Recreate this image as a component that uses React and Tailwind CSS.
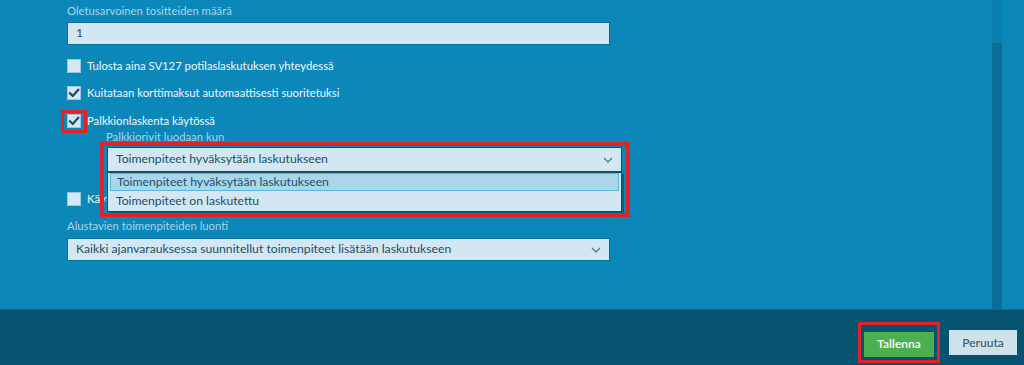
import React from 'react';

const font = { fontFamily: 'Lato, "Noto Sans", sans-serif' };

const Check = () => (
    <svg width="12" height="12" viewBox="0 0 12 12" className="block">
        <path d="M2 6.2 L4.8 9 L10.2 2.8" fill="none" stroke="#1b4966" strokeWidth="2.2" strokeLinecap="square" />
    </svg>
);

const Checkbox = ({ checked }) => (
    <div className="w-[14px] h-[14px] bg-[#d3e8f2] border border-[#9cc8dc] flex items-center justify-center shrink-0">
        {checked && <Check />}
    </div>
);

const Chevron = () => (
    <svg width="10" height="6" viewBox="0 0 10 6">
        <path d="M1 1 L5 5 L9 1" fill="none" stroke="#4a7f9c" strokeWidth="1.3" />
    </svg>
);

const CheckRow = ({ checked, label, className = '', children }) => (
    <div className={`relative flex items-center gap-[6px] h-[16px] ${className}`}>
        <Checkbox checked={checked} />
        <span className="text-[11.3px] text-[#eef7fb] leading-[16px] whitespace-nowrap">{label}</span>
        {children}
    </div>
);

const App = () => {
    return (
        <div className="w-[1024px] h-[365px] flex flex-col overflow-hidden bg-[#0b87ba]" style={font}>
            {/* Settings panel */}
            <div className="relative h-[309px] flex">
                <div className="flex-1 pl-[67px]">
                    <div className="mt-[3px] h-[16px] text-[11.3px] leading-[16px] text-[#a9d3e7]">Oletusarvoinen tositteiden määrä</div>
                    <div className="mt-[3px] w-[543px] h-[23px] bg-[#d2e7f1] border border-[#0a6f9a] flex items-center px-[8px] text-[12.2px] text-[#244f6a]">1</div>

                    <CheckRow className="mt-[13px]" label="Tulosta aina SV127 potilaslaskutuksen yhteydessä" />
                    <CheckRow className="mt-[11px]" checked label="Kuitataan korttimaksut automaattisesti suoritetuksi" />
                    <CheckRow className="mt-[12px]" checked label="Palkkionlaskenta käytössä">
                        <div className="absolute -left-[6px] -top-[3px] w-[26px] h-[23px] border-[3px] border-[#e3212b]" />
                    </CheckRow>

                    <div className="relative ml-[39px] w-[516px]">
                        <div className="mt-[1px] h-[14px] text-[11.3px] leading-[14px] text-[#a9d3e7]">Palkkiorivit luodaan kun</div>
                        <div className="mt-[3px] ml-[1px] h-[25px] bg-[#d2e7f1] border border-[#164c66] flex items-center justify-between pl-[8px] pr-[8px] text-[12.2px] text-[#1f4e6c]">
                            <span>Toimenpiteet hyväksytään laskutukseen</span>
                            <Chevron />
                        </div>
                        {/* open list */}
                        <div className="absolute left-[1px] top-[42px] w-[515px] bg-[#d2e7f1] border border-[#164c66] shadow-[2px_2px_0_#0a5f82] z-10 text-[12.2px] text-[#1f4e6c]">
                            <div className="h-[18px] mx-[2px] bg-[#a8d7ec] border border-[#5fb4d9] flex items-center pl-[6px]">Toimenpiteet hyväksytään laskutukseen</div>
                            <div className="h-[20px] flex items-center pl-[8px]">Toimenpiteet on laskutettu</div>
                        </div>
                        <div className="absolute -left-[6px] top-[12px] w-[530px] h-[75px] border-[4px] border-[#e3212b] z-20" />
                    </div>

                    <CheckRow className="mt-[19px]" label="Käytä" />

                    <div className="mt-[12px] h-[14px] text-[11.3px] leading-[14px] text-[#a9d3e7]">Alustavien toimenpiteiden luonti</div>
                    <div className="mt-[5px] w-[543px] h-[23px] bg-[#d2e7f1] border border-[#0a6f9a] flex items-center justify-between pl-[8px] pr-[8px] text-[12.2px] text-[#1f4e6c]">
                        <span>Kaikki ajanvarauksessa suunnitellut toimenpiteet lisätään laskutukseen</span>
                        <Chevron />
                    </div>
                </div>

                {/* scrollbar */}
                <div className="w-[10px] mr-[22px] flex flex-col bg-[#0a80b0]">
                    <div className="h-[43px]" />
                    <div className="flex-1 bg-[#076f98]" />
                </div>
            </div>

            {/* Footer */}
            <div className="flex-1 bg-[#05536f] border-t border-[#0a6a8f] flex items-start justify-end pr-[7px] pt-[12px] gap-[9px]">
                <div className="border-[3px] border-[#e3212b] pt-[5px] pb-[3px] px-[3px]">
                    <button className="w-[70px] h-[25px] bg-[#4cb050] text-white text-[12px] font-semibold">Tallenna</button>
                </div>
                <button className="mt-[8px] w-[68px] h-[25px] bg-[#cfe2ea] text-[#2d5a78] text-[12px] font-medium">Peruuta</button>
            </div>
        </div>
    );
};

export default App;
